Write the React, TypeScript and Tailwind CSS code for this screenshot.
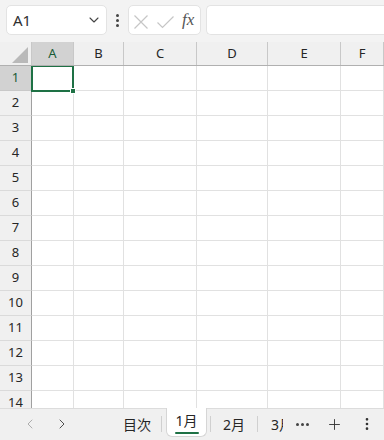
import { ChevronDown, ChevronLeft, ChevronRight, Plus, MoreVertical } from "lucide-react";

const cols = [
  { label: "A", w: "w-[42px]", selected: true },
  { label: "B", w: "w-[50px]", selected: false },
  { label: "C", w: "w-[73px]", selected: false },
  { label: "D", w: "w-[71px]", selected: false },
  { label: "E", w: "w-[73px]", selected: false },
  { label: "F", w: "flex-1", selected: false },
];

const rows = Array.from({ length: 14 }, (_, i) => i + 1);

function FormulaBar() {
  return (
    <div className="flex h-[42px] shrink-0 items-start gap-[5px] bg-[#f3f3f3] pl-[6px] pt-[5px]">
      <div className="flex h-[30px] w-[101px] items-center justify-between rounded-[5px] border border-[#e3e3e3] bg-white pl-[6px] pr-[4px]">
        <span className="text-[15px] text-[#303030]">A1</span>
        <ChevronDown className="h-4 w-4 text-[#444]" strokeWidth={1.6} />
      </div>
      <div className="flex h-[30px] w-[11px] flex-col items-center justify-center gap-[2px]">
        <span className="h-[3px] w-[3px] rounded-full bg-[#444]" />
        <span className="h-[3px] w-[3px] rounded-full bg-[#444]" />
        <span className="h-[3px] w-[3px] rounded-full bg-[#444]" />
      </div>
      <div className="flex h-[30px] w-[73px] items-center rounded-[5px] border border-[#e3e3e3] bg-white">
        {/* cancel / enter */}
        <svg width="48" height="28" viewBox="0 0 48 28" className="shrink-0" fill="none" stroke="#c6c6c6" strokeWidth="1.2">
          <path d="M5.5 9.5 L18.5 22.5 M18.5 9.5 L5.5 22.5" />
          <path d="M28.5 16.5 L33.5 21.5 L44.5 10.5" />
        </svg>
        <span className="ml-[5px] font-['Liberation_Serif',serif] text-[17px] italic text-[#555]">fx</span>
      </div>
      <div className="h-[30px] flex-1 rounded-l-[5px] border border-r-0 border-[#e3e3e3] bg-white" />
    </div>
  );
}

function HeaderRow() {
  return (
    <div className="flex h-[24px] shrink-0 border-b border-[#b0b0b0] bg-[#f0f0f0]">
      <div className="relative w-[32px] shrink-0 border-r border-[#c8c8c8]">
        <div className="absolute bottom-[2px] right-[3px] h-0 w-0 border-b-[16px] border-l-[16px] border-b-[#b9b9b9] border-l-transparent" />
      </div>
      {cols.map((c) => (
        <div
          key={c.label}
          className={`${c.w} flex shrink-0 items-center justify-center border-r border-[#c8c8c8] text-[13px] ${
            c.selected ? "bg-[#d2d2d2] text-[#185c37]" : "text-[#262626]"
          }`}
        >
          {c.label}
        </div>
      ))}
    </div>
  );
}

function GridRow({ n }: { n: number }) {
  return (
    <div className="flex h-[25px] shrink-0">
      <div
        className={`flex w-[32px] shrink-0 items-center justify-center border-r border-b text-[13px] ${
          n === 1
            ? "border-r-[#a0a0a0] border-b-[#c8c8c8] bg-[#d2d2d2] text-[#185c37]"
            : "border-r-[#a0a0a0] border-b-[#dadada] bg-[#f0f0f0] text-[#262626]"
        }`}
      >
        {n}
      </div>
      {cols.map((c) => (
        <div
          key={c.label}
          className={`${c.w} relative shrink-0 border-r border-b border-[#e1e1e1] bg-white`}
        >
          {n === 1 && c.selected && (
            <div className="absolute -left-px -top-px -right-px -bottom-[2px] z-10 border-2 border-[#1e7145]">
              <div className="absolute -bottom-[4px] -right-[4px] h-[6px] w-[6px] border border-white bg-[#1e7145]" />
            </div>
          )}
        </div>
      ))}
    </div>
  );
}

function Sep() {
  return <div className="h-[16px] w-px bg-[#d0d0d0]" />;
}

function SheetTabs() {
  return (
    <div className="flex h-[32px] shrink-0 items-start border-t border-[#dcdcdc] bg-[#f0f0f0] text-[14px] text-[#262626]">
      <div className="flex h-[30px] items-center pl-[22px]">
        <ChevronLeft className="h-[16px] w-[16px] text-[#a8a8a8]" strokeWidth={1.4} />
        <ChevronRight className="ml-[16px] h-[16px] w-[16px] text-[#444]" strokeWidth={1.4} />
      </div>
      <div className="ml-[53px] flex h-[30px] items-center">
        <span>目次</span>
      </div>
      <div className="ml-[10px] flex h-[30px] items-center">
        <Sep />
      </div>
      <div className="-mt-px ml-[4px] flex h-[29px] w-[41px] flex-col items-center justify-center rounded-b-[6px] border border-t-0 border-[#d6d6d6] bg-white">
        <span className="mt-[1px] leading-[18px]">1月</span>
        <span className="mt-[2px] h-[2px] w-[24px] rounded bg-[#1e7145]" />
      </div>
      <div className="ml-[3px] flex h-[30px] items-center">
        <Sep />
      </div>
      <div className="ml-[12px] flex h-[30px] items-center">
        <span>2月</span>
      </div>
      <div className="ml-[12px] flex h-[30px] items-center">
        <Sep />
      </div>
      <div className="ml-[13px] flex h-[30px] w-[12px] items-center overflow-hidden">
        <span className="whitespace-nowrap">3月</span>
      </div>
      <div className="ml-[13px] flex h-[30px] items-center gap-[2px]">
        <span className="h-[3px] w-[3px] rounded-full bg-[#444]" />
        <span className="h-[3px] w-[3px] rounded-full bg-[#444]" />
        <span className="h-[3px] w-[3px] rounded-full bg-[#444]" />
      </div>
      <div className="ml-[17px] flex h-[30px] items-center">
        <Plus className="h-[17px] w-[17px] text-[#333]" strokeWidth={1.3} />
      </div>
      <div className="ml-[16px] flex h-[30px] items-center">
        <MoreVertical className="h-[16px] w-[16px] text-[#333]" strokeWidth={2} />
      </div>
    </div>
  );
}

export default function App() {
  return (
    <div className="flex h-[440px] w-[384px] flex-col overflow-hidden bg-white font-['Noto_Sans','Noto_Sans_CJK_JP',sans-serif]">
      <FormulaBar />
      <HeaderRow />
      <div className="flex flex-1 flex-col overflow-hidden">
        {rows.map((n) => (
          <GridRow key={n} n={n} />
        ))}
      </div>
      <SheetTabs />
    </div>
  );
}
